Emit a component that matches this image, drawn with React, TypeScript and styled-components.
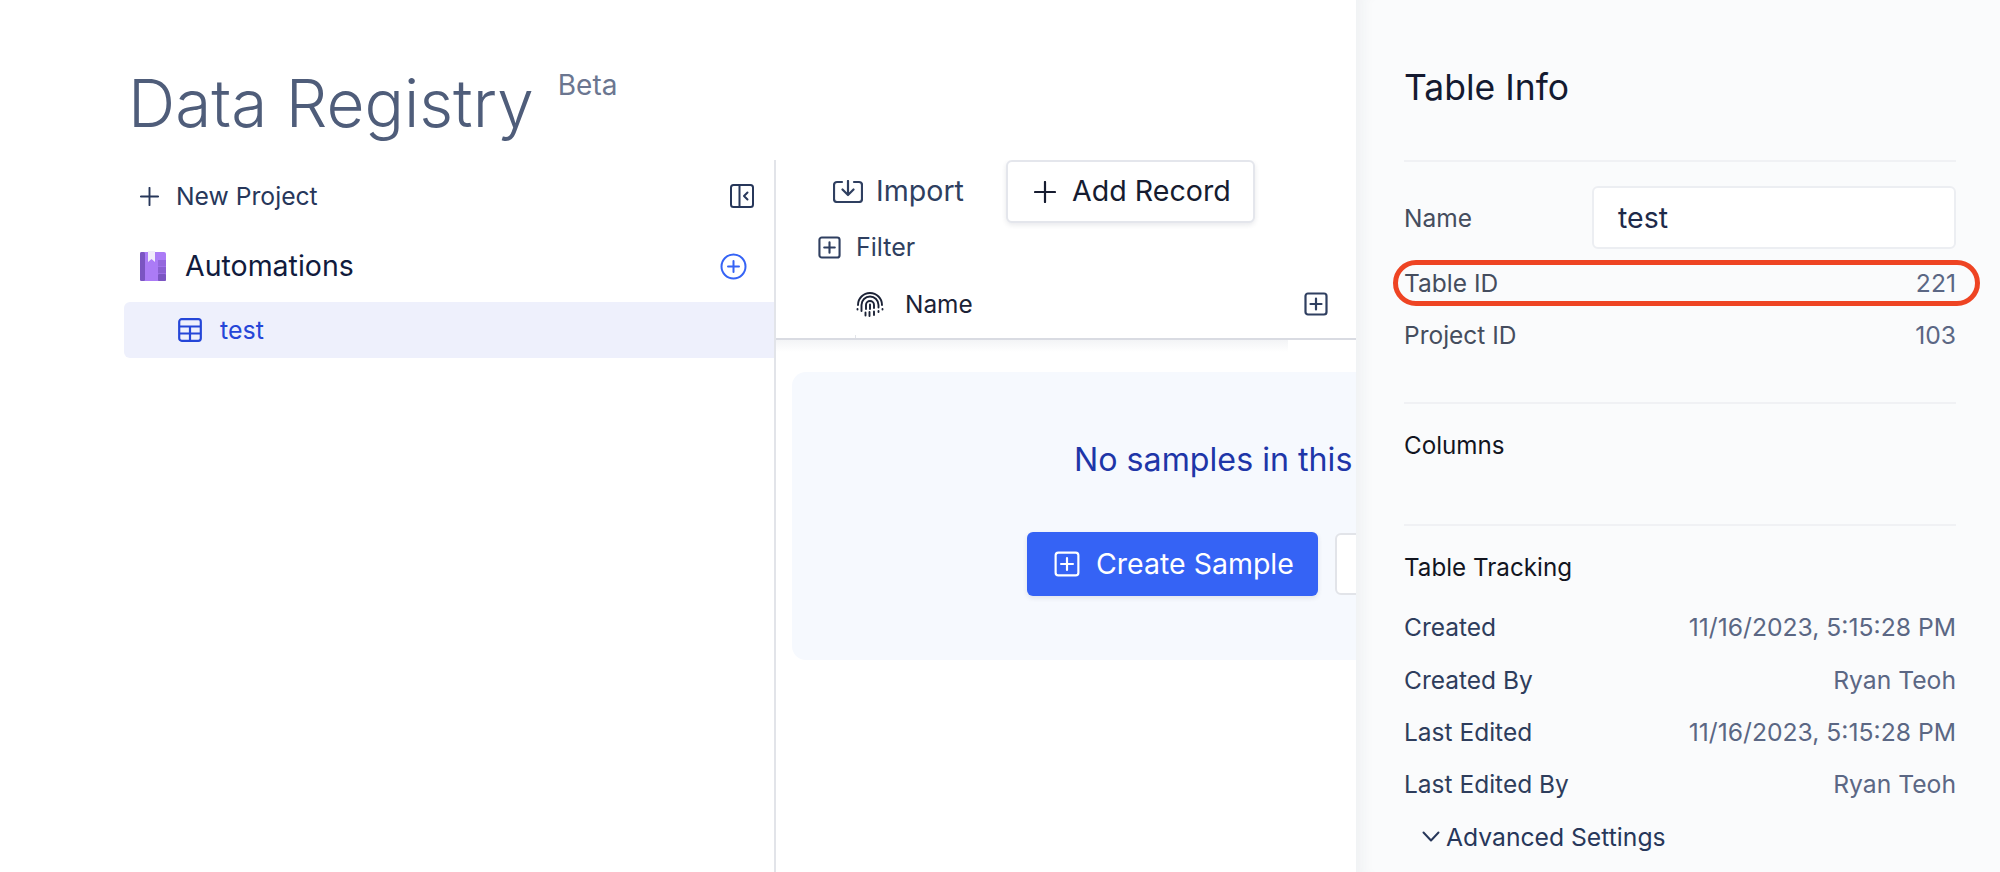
import React from 'react'
import styled, { createGlobalStyle } from 'styled-components'

const GlobalStyle = createGlobalStyle`
    html, body {
        margin: 0;
        padding: 0;
        background: #fff;
        font-family: Inter, "Liberation Sans", sans-serif;
    }
    * {
        box-sizing: border-box;
    }
`

const SquarePlusIcon = ({ size, stroke = 2.2 }: { size: number; stroke?: number }) => (
    <svg width={size} height={size} viewBox="0 0 24 24" fill="none" stroke="currentColor" strokeWidth={stroke} strokeLinecap="round">
        <rect x="1.5" y="1.5" width="21" height="21" rx="2.5" />
        <path d="M12 6.500v11M6.500 12h11" />
    </svg>
)

const PlusIcon = ({ size }: { size: number }) => (
    <svg width={size} height={size} viewBox="0 0 22 22" fill="none" stroke="currentColor" strokeWidth="2.2" strokeLinecap="round">
        <path d="M11 1v20M1 11h20" />
    </svg>
)

const ChevronIcon = () => (
    <svg width="18" height="11" viewBox="0 0 18 11" fill="none" stroke="currentColor" strokeWidth="2" strokeLinecap="round" strokeLinejoin="round">
        <path d="m1.500 1.500 7.500 8 7.500-8" />
    </svg>
)

const ImportIcon = () => (
    <svg width="30" height="23" viewBox="0 0 30 23" fill="none" stroke="currentColor" strokeWidth="2.200" strokeLinecap="round" strokeLinejoin="round">
        <path d="M9 2H4a3 3 0 0 0-3 3v14a3 3 0 0 0 3 3h22a3 3 0 0 0 3-3V5a3 3 0 0 0-3-3h-5" />
        <path d="M15 1v13M9.500 9.500 15 15l5.500-5.500" />
    </svg>
)

const CollapseIcon = () => (
    <svg width="24" height="24" viewBox="0 0 24 24" fill="none" stroke="currentColor" strokeWidth="2" strokeLinecap="round" strokeLinejoin="round">
        <rect x="1" y="1" width="22" height="22" rx="2.500" />
        <path d="M9.500 1v22M17.500 8.500 14 12l3.500 3.500" />
    </svg>
)

const CirclePlusIcon = () => (
    <svg width="27" height="27" viewBox="0 0 27 27" fill="none" stroke="currentColor" strokeWidth="2" strokeLinecap="round">
        <circle cx="13.500" cy="13.500" r="12" />
        <path d="M13.500 8v11M8 13.500h11" />
    </svg>
)

const TableIcon = () => (
    <svg width="24" height="24" viewBox="0 0 24 24" fill="none" stroke="currentColor" strokeWidth="2.200" strokeLinejoin="round">
        <rect x="1.200" y="1.200" width="21.600" height="21.600" rx="2.500" />
        <path d="M1.200 8.500h21.600M1.200 15.500h21.600M12 8.500v14.300" />
    </svg>
)

const BookIcon = () => (
    <svg width="26" height="31" viewBox="0 0 26 31">
        <rect x="0" y="1" width="26" height="29" rx="2" fill="#ab7bf6" />
        <rect x="0" y="1" width="5" height="29" rx="1.500" fill="#7b55c2" />
        <rect x="18" y="9" width="8" height="6.500" fill="#9468dd" />
        <rect x="18" y="16" width="8" height="6.500" fill="#8a60d2" />
        <rect x="18" y="23" width="8" height="7" rx="1" fill="#7b55c2" />
        <path d="M8 0h7v11l-3.500-3L8 11z" fill="#f1ebfb" />
    </svg>
)

const FingerprintIcon = () => (
    <svg width="28" height="26" viewBox="0 0 28 26" fill="none" stroke="currentColor" strokeWidth="1.900" strokeLinecap="round">
        <path d="M2 14A12 12 0 0 1 26 14" />
        <path d="M1.500 18v.5M26.500 18v.5" />
        <path d="M5.500 20v-6a8.500 8.500 0 0 1 17 0v2.500M22.500 20v1" />
        <path d="M9.500 24.500v-3M10 18v-4a4 4 0 0 1 8 0v3M18 20.500v3.500" />
        <path d="M14 13.500v4.500M13.500 21v4" />
    </svg>
)

const rows = [
    ['Created', '11/16/2023, 5:15:28 PM'],
    ['Created By', 'Ryan Teoh'],
    ['Last Edited', '11/16/2023, 5:15:28 PM'],
    ['Last Edited By', 'Ryan Teoh'],
]

export default function App() {
    return (
        <Page>
            <GlobalStyle />
            <Content>
                <Header>
                    <Title>Data Registry</Title>
                    <Beta>Beta</Beta>
                </Header>
                <Body>
                    <Sidebar>
                        <NewProjectRow>
                            <NewProject>
                                <PlusIcon size={19} />
                                New Project
                            </NewProject>
                            <CollapseIcon />
                        </NewProjectRow>
                        <ProjectRow>
                            <ProjectName>
                                <BookIcon />
                                Automations
                            </ProjectName>
                            <AddTable>
                                <CirclePlusIcon />
                            </AddTable>
                        </ProjectRow>
                        <TableRow>
                            <TableIcon />
                            <span>test</span>
                        </TableRow>
                    </Sidebar>
                    <Workspace>
                        <Toolbar>
                            <ImportButton>
                                <ImportIcon />
                                <span>Import</span>
                            </ImportButton>
                            <AddRecordButton>
                                <PlusIcon size={22} />
                                <span>Add Record</span>
                            </AddRecordButton>
                        </Toolbar>
                        <FilterRow>
                            <SquarePlusIcon size={23} />
                            Filter
                        </FilterRow>
                        <ColumnRow>
                            <ColumnName>
                                <FingerprintIcon />
                                Name
                            </ColumnName>
                            <AddColumn>
                                <SquarePlusIcon size={24} />
                            </AddColumn>
                        </ColumnRow>
                        <HeadShadow />
                        <EmptyCard>
                            <EmptyText>No samples in this</EmptyText>
                            <EmptyActions>
                                <CreateButton>
                                    <SquarePlusIcon size={26} stroke={2} />
                                    <span>Create Sample</span>
                                </CreateButton>
                                <SecondaryButton />
                            </EmptyActions>
                        </EmptyCard>
                    </Workspace>
                </Body>
            </Content>
            <Panel>
                <PanelHead>
                    <PanelTitle>Table Info</PanelTitle>
                </PanelHead>
                <InfoSection>
                    <NameRow>
                        <Label>Name</Label>
                        <NameField>test</NameField>
                    </NameRow>
                    <IdRow>
                        <Label>Table ID</Label>
                        <Value>221</Value>
                        <Highlight />
                    </IdRow>
                    <IdRow>
                        <Label>Project ID</Label>
                        <Value>103</Value>
                    </IdRow>
                </InfoSection>
                <ColumnsSection>
                    <SectionTitle>Columns</SectionTitle>
                </ColumnsSection>
                <TrackingSection>
                    <SectionTitle>Table Tracking</SectionTitle>
                    <TrackingList>
                        {rows.map(([label, value], i) => (
                            <TrackingRow key={i}>
                                <TrackingLabel>{label}</TrackingLabel>
                                <Value>{value}</Value>
                            </TrackingRow>
                        ))}
                        <AdvancedRow>
                            <ChevronIcon />
                            Advanced Settings
                        </AdvancedRow>
                    </TrackingList>
                </TrackingSection>
            </Panel>
        </Page>
    )
}

const Page = styled.div`
    display: flex;
    width: 2000px;
    height: 872px;
    overflow: hidden;
`

const Content = styled.div`
    width: 1356px;
    flex-shrink: 0;
    padding-left: 124px;
    overflow: hidden;
`

const Header = styled.header`
    display: flex;
    align-items: flex-start;
    height: 160px;
    padding: 64px 0 0 4px;
`

const Title = styled.h1`
    margin: 0;
    font-size: 65.600px;
    line-height: 78px;
    font-weight: 300;
    color: #4f5d7a;
`

const Beta = styled.span`
    margin: 4px 0 0 24px;
    font-size: 28px;
    line-height: 34px;
    color: #6b7690;
`

const Body = styled.div`
    display: flex;
    height: 712px;
`

const Sidebar = styled.aside`
    width: 652px;
    flex-shrink: 0;
    border-right: 2px solid #e2e4e9;
`

const NewProjectRow = styled.div`
    display: flex;
    align-items: center;
    justify-content: space-between;
    height: 72px;
    padding: 0 20px 0 16px;
    color: #27375a;
`

const NewProject = styled.div`
    display: flex;
    align-items: center;
    gap: 17px;
    font-size: 24.700px;
    line-height: 30px;
    margin-top: -1px;

    svg {
        margin-top: 1px;
    }
`

const ProjectRow = styled.div`
    display: flex;
    align-items: center;
    justify-content: space-between;
    height: 68px;
    padding: 0 27px 0 16px;
`

const ProjectName = styled.div`
    display: flex;
    align-items: center;
    gap: 19px;
    font-size: 28.500px;
    line-height: 34px;
    color: #111b3d;
`

const AddTable = styled.span`
    display: flex;
    color: #3563f5;
`

const TableRow = styled.div`
    display: flex;
    align-items: center;
    gap: 18px;
    height: 56px;
    margin-top: 2px;
    padding-left: 54px;
    border-radius: 6px 0 0 6px;
    background: #eef0fc;
    font-size: 25px;
    color: #2546d8;

    span {
        margin-top: -1px;
    }
`

const Workspace = styled.main`
    flex: 1;
    min-width: 0;
    overflow: hidden;
`

const Toolbar = styled.div`
    display: flex;
    align-items: center;
    height: 63px;
    padding-left: 57px;
`

const ImportButton = styled.div`
    display: flex;
    align-items: center;
    gap: 13px;
    width: 173px;
    font-size: 28.600px;
    color: #2f3f60;

    span {
        margin-top: -2px;
    }
`

const AddRecordButton = styled.div`
    display: flex;
    align-items: center;
    gap: 16px;
    width: 249px;
    height: 63px;
    padding-left: 26px;
    border: 2px solid #e4e6ec;
    border-radius: 6px;
    background: #fff;
    box-shadow: 0 2px 5px rgba(30, 40, 70, 0.1);
    font-size: 28.600px;
    color: #161c30;

    span {
        margin-top: -2px;
    }
`

const FilterRow = styled.div`
    display: flex;
    align-items: center;
    gap: 15px;
    height: 48px;
    padding-left: 42px;
    font-size: 25px;
    line-height: 30px;
    color: #2f3f60;
`

const ColumnRow = styled.div`
    position: relative;
    display: flex;
    align-items: center;
    justify-content: space-between;
    width: 580px;
    height: 69px;
    padding: 0 28px 2px 80px;
    border-bottom: 2px solid #d9dbe2;

    &::after {
        content: '';
        position: absolute;
        left: 79px;
        bottom: 0;
        width: 1px;
        height: 3px;
        background: #e2e4e9;
    }
`

const ColumnName = styled.div`
    display: flex;
    align-items: center;
    gap: 21px;
    font-size: 24.400px;
    color: #1b2236;
`

const AddColumn = styled.span`
    display: flex;
    color: #2f3f60;
`

const HeadShadow = styled.div`
    width: 512px;
    height: 12px;
    background: linear-gradient(#f3f4f6, #fff);
`

const EmptyCard = styled.div`
    display: flex;
    flex-direction: column;
    align-items: flex-start;
    width: 923px;
    height: 288px;
    margin: 20px 0 0 16px;
    padding: 68px 0 0 235px;
    border-radius: 14px;
    background: #f6f9fe;
`

const EmptyText = styled.div`
    margin-left: 47px;
    font-size: 32.200px;
    line-height: 40px;
    white-space: nowrap;
    color: #1e36a8;
`

const EmptyActions = styled.div`
    display: flex;
    align-items: center;
    gap: 17px;
    margin-top: 52px;
`

const CreateButton = styled.div`
    display: flex;
    align-items: center;
    gap: 16px;
    width: 291px;
    height: 64px;
    padding-left: 27px;
    border-radius: 6px;
    background: #3563f5;
    box-shadow: 0 2px 5px rgba(30, 40, 70, 0.1);
    font-size: 28.500px;
    color: #fff;

    span {
        margin-top: -2px;
    }
`

const SecondaryButton = styled.div`
    width: 145px;
    height: 62px;
    border: 2px solid #e2e4e9;
    border-radius: 6px;
    background: #fff;
`

const Panel = styled.aside`
    flex: 1;
    padding: 0 44px 0 48px;
    background: #fafbfc;
    box-shadow: inset 16px 0 14px -10px rgba(40, 50, 80, 0.05);
`

const PanelHead = styled.div`
    height: 162px;
    padding-top: 68px;
    border-bottom: 2px solid #f0f1f4;
`

const PanelTitle = styled.h2`
    margin: 0;
    font-size: 35.500px;
    line-height: 40px;
    font-weight: 400;
    color: #141a30;
`

const InfoSection = styled.section`
    height: 242px;
    padding-top: 24px;
    border-bottom: 2px solid #f0f1f4;
`

const NameRow = styled.div`
    display: flex;
    align-items: center;
    justify-content: space-between;
    margin-bottom: 8px;
`

const Label = styled.span`
    font-size: 24.500px;
    color: #454d5e;
`

const NameField = styled.div`
    display: flex;
    align-items: center;
    width: 364px;
    height: 63px;
    padding-left: 24px;
    border: 2px solid #eceef2;
    border-radius: 6px;
    background: #fff;
    font-size: 28.500px;
    color: #1e2a4a;
`

const IdRow = styled.div`
    position: relative;
    display: flex;
    align-items: center;
    justify-content: space-between;
    height: 52px;
`

const Value = styled.span`
    font-size: 24.700px;
    color: #5b6784;
`

const Highlight = styled.div`
    position: absolute;
    left: -11px;
    right: -24px;
    top: 3px;
    height: 46px;
    border: 5px solid #ee4423;
    border-radius: 23px;
`

const ColumnsSection = styled.section`
    height: 122px;
    padding-top: 26px;
    border-bottom: 2px solid #f0f1f4;
`

const SectionTitle = styled.h3`
    margin: 0;
    font-size: 24.200px;
    line-height: 32px;
    font-weight: 400;
    color: #12151f;
`

const TrackingSection = styled.section`
    padding-top: 26px;
`

const TrackingList = styled.div`
    margin-top: 17px;
`

const TrackingRow = styled.div`
    display: flex;
    align-items: center;
    justify-content: space-between;
    height: 52.400px;
`

const TrackingLabel = styled.span`
    font-size: 24.500px;
    color: #2e3d5c;
`

const AdvancedRow = styled.div`
    display: flex;
    align-items: center;
    gap: 6px;
    height: 52px;
    padding-left: 18px;
    font-size: 24.700px;
    color: #27375a;
`
